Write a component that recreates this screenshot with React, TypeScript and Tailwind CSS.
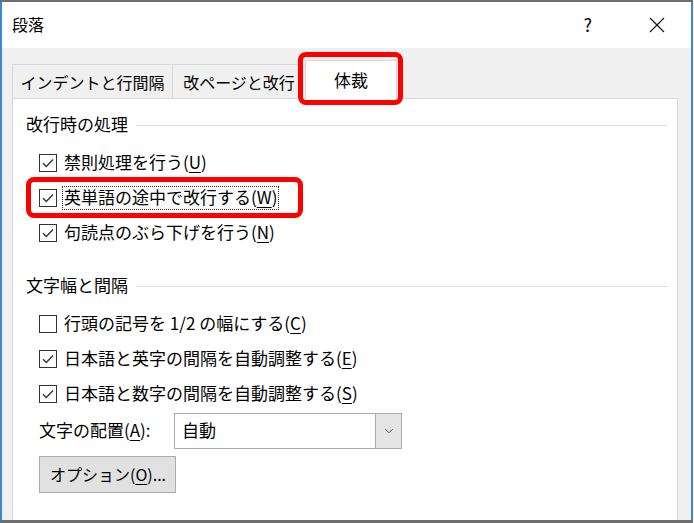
import { ChevronDown } from "lucide-react";

interface OptionRow {
  id: string;
  label: string;
  accel: string;
  checked: boolean;
  focused?: boolean;
}

const lineBreakRows: OptionRow[] = [
  { id: "kinsoku", label: "禁則処理を行う", accel: "U", checked: true },
  { id: "word-wrap", label: "英単語の途中で改行する", accel: "W", checked: true, focused: true },
  { id: "hanging", label: "句読点のぶら下げを行う", accel: "N", checked: true },
];

const spacingRows: OptionRow[] = [
  { id: "half-width", label: "行頭の記号を 1/2 の幅にする", accel: "C", checked: false },
  { id: "auto-en", label: "日本語と英字の間隔を自動調整する", accel: "E", checked: true },
  { id: "auto-num", label: "日本語と数字の間隔を自動調整する", accel: "S", checked: true },
];

function CheckBox({ checked }: { checked: boolean }) {
  return (
    <span className="w-[18px] h-[18px] border border-[#333333] bg-white flex items-center justify-center shrink-0">
      {checked && (
        <svg width="14" height="14" viewBox="0 0 14 14">
          <path d="M2 7.2 L5.3 10.5 L12 3.6" stroke="#333333" strokeWidth="1.4" fill="none" />
        </svg>
      )}
    </span>
  );
}

function SectionHeading({ title }: { title: string }) {
  return (
    <div className="h-[24px] flex items-center pl-[13px] pr-[10px]">
      <span className="text-[17px] leading-[20px] pb-[4px]">{title}</span>
      <div className="flex-1 h-px bg-[#dcdcdc] ml-[8px] -mt-[2px]" />
    </div>
  );
}

function Row({ row }: { row: OptionRow }) {
  return (
    <div className="relative h-[35px] flex items-center pl-[26px]">
      <CheckBox checked={row.checked} />
      <span
        className={`ml-[5px] px-[1px] pb-[2px] text-[17px] leading-[20px] border border-dotted ${
          row.focused ? "border-[#333333]" : "border-transparent"
        }`}
      >
        {row.label}(<span className="underline underline-offset-[3px]">{row.accel}</span>)
      </span>
      {row.focused && (
        <div className="absolute left-[13px] top-[-3px] w-[277px] h-[41px] border-[5px] border-[#ff0000] rounded-[8px]" />
      )}
    </div>
  );
}

export default function App() {
  return (
    <div className="w-[694px] h-[523px] bg-white font-['Noto_Sans_CJK_JP',sans-serif] text-black">
      <div className="w-[693px] h-[523px] flex flex-col border-t-2 border-b-[3px] border-[#6e6e6e] overflow-hidden">
        <div className="flex-1 flex flex-col border-l-2 border-r-2 border-[#3b88d6] min-h-0">
          {/* title bar */}
          <div className="h-[46px] bg-white flex items-center pl-[10px] pr-[26px] shrink-0">
            <span className="text-[16px] leading-[20px] pb-[2px] flex-1">段落</span>
            <span className="text-[18px] leading-[20px] pb-[2px] mr-[57px]">?</span>
            <svg width="16" height="16" viewBox="0 0 16 16">
              <path d="M1 1 L15 15 M15 1 L1 15" stroke="#1a1a1a" strokeWidth="1.3" />
            </svg>
          </div>

          {/* body */}
          <div className="flex-1 bg-[#f0f0f0] flex flex-col pt-[12px] pl-[10px] pr-[13px] min-h-0">
            <div className="flex items-end h-[38px] shrink-0">
              <div className="w-[160px] h-[34px] border-t border-l border-[#d9d9d9] flex items-center justify-center text-[16px]">
                インデントと行間隔
              </div>
              <div className="w-[133px] h-[34px] border-t border-l border-[#d9d9d9] flex items-center justify-center text-[16px]">
                改ページと改行
              </div>
              <div className="relative z-10 w-[92px] h-[39px] -mb-px bg-white border-t border-l border-r border-[#d9d9d9] flex items-center justify-center text-[17px]">
                体裁
                <div className="absolute left-[-8px] top-[-9px] w-[105px] h-[53px] border-[5px] border-[#ff0000] rounded-[8px]" />
              </div>
            </div>

            <div className="flex-1 bg-white border-t border-l border-r border-[#d9d9d9] pt-[15px] flex flex-col">
              <SectionHeading title="改行時の処理" />
              <div className="mt-[7px]">
                {lineBreakRows.map((row) => (
                  <Row key={row.id} row={row} />
                ))}
              </div>

              <div className="mt-[25px]">
                <SectionHeading title="文字幅と間隔" />
              </div>
              <div className="mt-[7px]">
                {spacingRows.map((row) => (
                  <Row key={row.id} row={row} />
                ))}
              </div>

              <div className="mt-[2px] flex items-center pl-[26px] h-[36px]">
                <span className="text-[17px] leading-[20px] pb-[2px] w-[135px]">
                  文字の配置(<span className="underline underline-offset-[3px]">A</span>):
                </span>
                <div className="w-[228px] h-[36px] border border-[#acacac] bg-white flex items-stretch">
                  <span className="flex-1 pl-[7px] text-[17px] leading-[32px]">自動</span>
                  <span className="w-[26px] bg-[#e5e5e5] border-l border-[#acacac] flex items-center justify-center">
                    <ChevronDown size={14} strokeWidth={1.6} color="#444444" />
                  </span>
                </div>
              </div>

              <div className="mt-[7px] pl-[26px]">
                <button className="w-[137px] h-[37px] bg-[#e1e1e1] border border-[#adadad] text-[16px] leading-[22px] pb-[2px] text-left pl-[10px]">
                  オプション(<span className="underline underline-offset-[3px]">O</span>)...
                </button>
              </div>
            </div>
          </div>
        </div>
      </div>
    </div>
  );
}
